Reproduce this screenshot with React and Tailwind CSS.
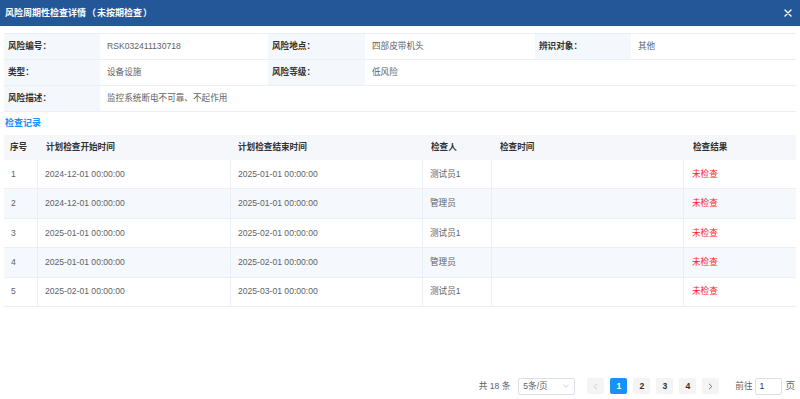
import React from "react";

const rows = [
  ["1", "2024-12-01 00:00:00", "2025-01-01 00:00:00", "测试员1"],
  ["2", "2024-12-01 00:00:00", "2025-01-01 00:00:00", "管理员"],
  ["3", "2025-01-01 00:00:00", "2025-02-01 00:00:00", "测试员1"],
  ["4", "2025-01-01 00:00:00", "2025-02-01 00:00:00", "管理员"],
  ["5", "2025-02-01 00:00:00", "2025-03-01 00:00:00", "测试员1"],
];

const cols = "grid grid-cols-[34px_193px_192px_69px_192px_112px]";

function Label({ children, className = "" }) {
  return (
    <div className={"flex items-center bg-[#f4f7fb] pl-[4px] font-bold text-[#303133] " + className}>
      {children}
    </div>
  );
}
function Value({ children, className = "" }) {
  return <div className={"flex items-center pl-[7px] text-[#606266] " + className}>{children}</div>;
}

export default function App() {
  return (
    <div className="w-[800px] h-[399px] bg-white flex flex-col font-['Liberation_Sans','Noto_Sans_CJK_SC',sans-serif] text-[8.6px] overflow-hidden">
      <div className="h-[26px] shrink-0 bg-[#235797] flex items-center justify-between pl-[5px] pr-[7px]">
        <span className="text-white font-bold text-[9px] font-['Noto_Sans_CJK_SC',sans-serif]">
          风险周期性检查详情<span className="px-[1px]">（</span>未按期检查<span className="px-[1px]">）</span>
        </span>
        <svg width="8" height="8" viewBox="0 0 8 8" className="mr-[1px]">
          <path d="M1 1L7 7M7 1L1 7" stroke="white" strokeWidth="1.4" strokeLinecap="round" />
        </svg>
      </div>

      <div className="mx-[4px] mt-[7px] border-t border-[#ebeef5]">
        <div className="grid grid-cols-[96px_168px_97px_170px_96px_165px] h-[26px] border-b border-[#ebeef5]">
          <Label>风险编号：</Label>
          <Value>RSK032411130718</Value>
          <Label>风险地点：</Label>
          <Value className="pl-[6px]">四部皮带机头</Value>
          <Label>辨识对象：</Label>
          <Value className="pl-[6px]">其他</Value>
        </div>
        <div className="grid grid-cols-[96px_168px_97px_1fr] h-[26px] border-b border-[#ebeef5]">
          <Label>类型：</Label>
          <Value>设备设施</Value>
          <Label>风险等级：</Label>
          <Value className="pl-[6px]">低风险</Value>
        </div>
        <div className="grid grid-cols-[96px_1fr] h-[26px] border-b border-[#ebeef5]">
          <Label>风险描述：</Label>
          <Value>监控系统断电不可靠、不起作用</Value>
        </div>
      </div>

      <div className="h-[23px] flex items-center pl-[5px] text-[#1890ff] font-bold text-[9px]">检查记录</div>

      <div className="mx-[4px]">
        <div className={cols + " h-[25px] bg-[#f5f7fa] font-bold text-[#303133]"}>
          <div className="flex items-center pl-[6px]">序号</div>
          <div className="flex items-center pl-[8px]">计划检查开始时间</div>
          <div className="flex items-center pl-[7px]">计划检查结束时间</div>
          <div className="flex items-center pl-[8px]">检查人</div>
          <div className="flex items-center pl-[8px]">检查时间</div>
          <div className="flex items-center pl-[9px]">检查结果</div>
        </div>
        {rows.map((r, i) => (
          <div
            key={i}
            className={
              cols +
              " h-[29.4px] border-b border-[#ebeef5] text-[#606266] " +
              (i % 2 === 1 ? "bg-[#f5f8fc]" : "bg-white")
            }
          >
            <div className="flex items-center pl-[7px] border-r border-[#ebeef5]">{r[0]}</div>
            <div className="flex items-center pl-[7px] border-r border-[#ebeef5]">{r[1]}</div>
            <div className="flex items-center pl-[7px] border-r border-[#ebeef5]">{r[2]}</div>
            <div className="flex items-center pl-[7px] border-r border-[#ebeef5]">{r[3]}</div>
            <div className="flex items-center border-r border-[#ebeef5]"></div>
            <div className="flex items-center pl-[8px] text-[#ff1a1a]">未检查</div>
          </div>
        ))}
      </div>

      <div className="mt-[71px] h-[17px] flex items-center justify-end pr-[5px] text-[#606266]">
        <span className="mr-[8px]">共 18 条</span>
        <div className="w-[57px] h-[17px] border border-[#dcdfe6] rounded-[2px] flex items-center justify-between pl-[4px] pr-[5px] mr-[12px]">
          <span>5条/页</span>
          <svg width="6" height="4" viewBox="0 0 6 4">
            <path d="M0.5 0.8L3 3.2L5.5 0.8" stroke="#c0c4cc" strokeWidth="0.8" fill="none" />
          </svg>
        </div>
        <div className="w-[17px] h-[16px] bg-[#f4f4f5] rounded-[2px] flex items-center justify-center mr-[6px]">
          <svg width="5" height="7" viewBox="0 0 5 7">
            <path d="M4 0.8L1.2 3.5L4 6.2" stroke="#c0c4cc" strokeWidth="0.9" fill="none" />
          </svg>
        </div>
        <div className="w-[17px] h-[16px] bg-[#1890ff] text-white font-bold rounded-[2px] flex items-center justify-center mr-[6px]">1</div>
        <div className="w-[17px] h-[16px] bg-[#f4f4f5] text-[#303133] font-bold rounded-[2px] flex items-center justify-center mr-[6px]">2</div>
        <div className="w-[17px] h-[16px] bg-[#f4f4f5] text-[#303133] font-bold rounded-[2px] flex items-center justify-center mr-[6px]">3</div>
        <div className="w-[17px] h-[16px] bg-[#f4f4f5] text-[#303133] font-bold rounded-[2px] flex items-center justify-center mr-[6px]">4</div>
        <div className="w-[17px] h-[16px] bg-[#f4f4f5] rounded-[2px] flex items-center justify-center mr-[16px]">
          <svg width="5" height="7" viewBox="0 0 5 7">
            <path d="M1 0.8L3.8 3.5L1 6.2" stroke="#606266" strokeWidth="0.9" fill="none" />
          </svg>
        </div>
        <span className="mr-[3px]">前往</span>
        <div className="w-[27px] h-[17px] border border-[#dcdfe6] rounded-[2px] flex items-center pl-[3px] text-[#303133] mr-[3px]">1</div>
        <span className="text-[9.5px]">页</span>
      </div>
    </div>
  );
}
